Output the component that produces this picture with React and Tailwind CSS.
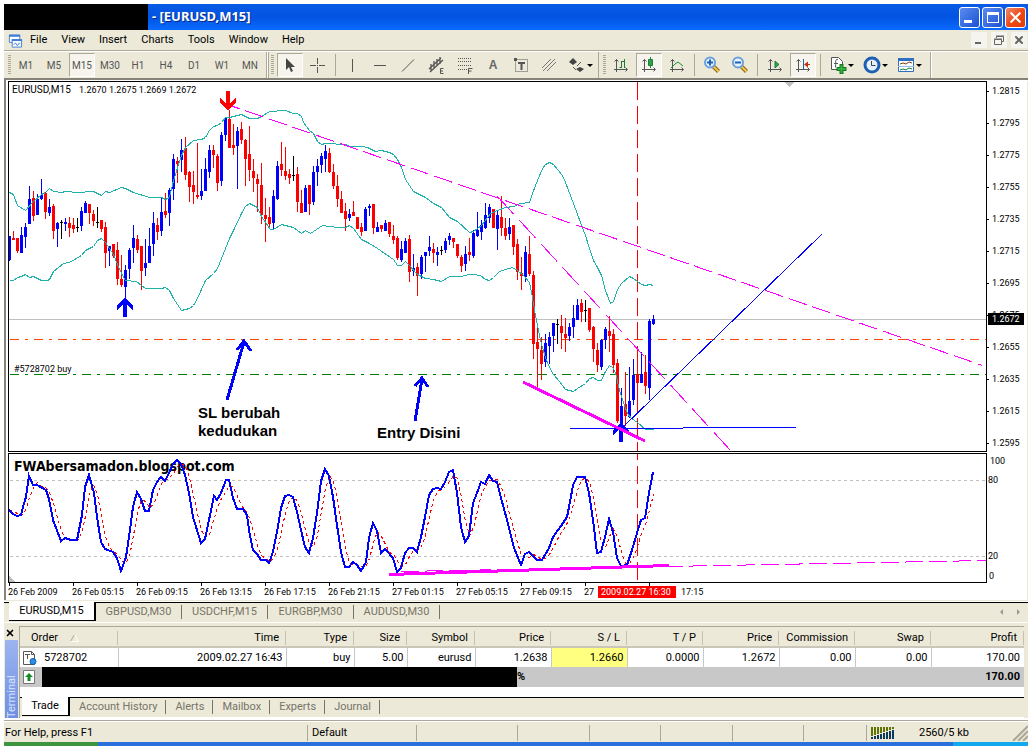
import { X } from 'lucide-react'

// [color, high, body top, body bottom, low], one candle every 4px
const CANDLES = [
  ['b', 236, 236, 260, 261], ['r', 231, 238, 240, 240], ['r', 238, 238, 251, 253], ['b', 227, 235, 253, 253],
  ['b', 223, 227, 237, 248], ['b', 186, 199, 224, 224], ['r', 191, 198, 216, 221], ['b', 194, 199, 215, 215],
  ['b', 179, 195, 199, 200], ['r', 192, 193, 212, 219], ['b', 199, 207, 213, 216], ['r', 204, 206, 231, 239],
  ['b', 222, 223, 229, 247], ['k', 220, 222, 223, 239], ['b', 218, 222, 224, 231], ['r', 217, 223, 228, 237],
  ['r', 218, 225, 229, 233], ['k', 218, 227, 228, 232], ['b', 207, 211, 226, 231], ['b', 201, 203, 213, 213],
  ['r', 204, 204, 213, 224], ['r', 210, 214, 221, 226], ['k', 207, 222, 223, 228], ['r', 220, 220, 229, 232],
  ['r', 222, 227, 253, 268], ['b', 246, 246, 251, 266], ['r', 244, 244, 256, 258], ['r', 242, 250, 279, 285],
  ['r', 255, 279, 285, 287], ['b', 265, 270, 287, 310], ['b', 248, 250, 269, 279], ['b', 225, 238, 248, 263],
  ['r', 235, 239, 250, 253], ['r', 246, 246, 271, 290], ['b', 239, 263, 268, 276], ['b', 228, 246, 263, 263],
  ['b', 212, 223, 244, 256], ['r', 218, 225, 232, 240], ['b', 198, 212, 231, 236], ['r', 193, 211, 215, 218],
  ['b', 188, 190, 213, 226], ['b', 154, 159, 189, 200], ['r', 157, 161, 164, 183], ['b', 139, 150, 160, 172],
  ['r', 137, 148, 175, 180], ['r', 171, 172, 187, 202], ['r', 171, 185, 192, 204], ['r', 143, 195, 197, 199],
  ['b', 169, 191, 196, 200], ['b', 158, 169, 191, 191], ['b', 145, 150, 172, 178], ['r', 145, 150, 155, 168],
  ['r', 154, 156, 183, 191], ['b', 132, 135, 181, 186], ['b', 117, 118, 135, 141], ['r', 110, 119, 148, 148],
  ['r', 124, 145, 148, 155], ['b', 127, 131, 146, 189], ['r', 122, 129, 140, 144], ['r', 139, 140, 159, 186],
  ['r', 126, 154, 170, 181], ['r', 159, 171, 178, 192], ['r', 174, 179, 184, 212], ['r', 163, 185, 215, 224],
  ['r', 198, 215, 219, 242], ['r', 207, 217, 224, 229], ['b', 190, 196, 223, 229], ['b', 161, 166, 199, 200],
  ['r', 142, 164, 170, 176], ['r', 147, 171, 176, 180], ['r', 169, 174, 178, 184], ['k', 156, 175, 176, 181],
  ['r', 167, 174, 202, 212], ['r', 190, 203, 213, 213], ['b', 185, 188, 212, 212], ['r', 185, 185, 204, 215],
  ['b', 166, 172, 202, 205], ['b', 159, 166, 172, 186], ['b', 153, 156, 165, 173], ['b', 145, 151, 159, 172],
  ['r', 148, 153, 172, 173], ['r', 164, 172, 186, 189], ['r', 175, 186, 199, 207], ['r', 191, 199, 213, 213],
  ['r', 203, 211, 219, 231], ['b', 209, 214, 218, 221], ['r', 201, 212, 216, 216], ['r', 217, 217, 229, 229],
  ['r', 223, 227, 232, 236], ['b', 207, 209, 231, 231], ['b', 204, 206, 208, 216], ['r', 204, 204, 228, 234],
  ['b', 222, 227, 232, 232], ['r', 225, 225, 229, 232], ['b', 220, 223, 231, 231], ['r', 222, 222, 234, 237],
  ['r', 225, 236, 240, 244], ['r', 236, 238, 258, 260], ['b', 241, 249, 260, 262], ['b', 238, 241, 253, 253],
  ['r', 235, 239, 272, 282], ['b', 254, 268, 271, 276], ['r', 263, 267, 276, 296], ['b', 255, 257, 274, 279],
  ['b', 252, 252, 256, 272], ['b', 236, 247, 251, 256], ['r', 243, 249, 253, 263], ['b', 247, 252, 255, 266],
  ['k', 246, 250, 251, 255], ['b', 238, 241, 250, 253], ['b', 233, 236, 240, 245], ['r', 238, 238, 242, 248],
  ['r', 244, 244, 256, 258], ['r', 255, 257, 266, 272], ['b', 246, 254, 264, 271], ['r', 238, 252, 255, 261],
  ['b', 230, 233, 256, 258], ['b', 212, 230, 236, 237], ['b', 220, 225, 232, 240], ['b', 203, 215, 228, 229],
  ['b', 204, 207, 218, 223], ['r', 209, 209, 228, 228], ['b', 211, 215, 229, 250], ['r', 196, 217, 228, 236],
  ['r', 218, 228, 236, 240], ['b', 218, 227, 234, 240], ['r', 225, 225, 247, 255], ['r', 239, 244, 272, 280],
  ['r', 257, 273, 276, 290], ['b', 246, 252, 277, 282], ['r', 236, 254, 274, 276], ['r', 271, 275, 344, 359],
  ['r', 328, 342, 349, 388], ['r', 337, 350, 364, 380], ['b', 334, 343, 362, 367], ['b', 332, 337, 346, 364],
  ['b', 323, 323, 336, 352], ['k', 319, 324, 325, 344], ['r', 315, 326, 333, 349], ['r', 318, 334, 338, 352],
  ['b', 323, 327, 336, 341], ['b', 305, 318, 327, 338], ['b', 299, 305, 320, 320], ['r', 299, 303, 312, 322],
  ['k', 300, 310, 311, 322], ['r', 308, 308, 330, 332], ['r', 326, 327, 349, 362], ['r', 343, 350, 365, 372],
  ['b', 339, 340, 367, 370], ['b', 327, 329, 340, 349], ['r', 316, 331, 336, 352], ['r', 329, 334, 365, 373],
  ['r', 359, 363, 421, 423], ['b', 388, 406, 425, 430], ['r', 372, 404, 416, 426], ['b', 367, 401, 417, 418],
  ['b', 359, 375, 400, 405], ['r', 346, 374, 383, 395], ['b', 352, 374, 383, 383], ['r', 355, 372, 386, 394],
  ['b', 319, 321, 388, 400], ['b', 315, 319, 324, 325],
]

const COLORS = { b: '#0000ff', r: '#ff0000', k: '#000000' }

const UPPER_BAND =
  '9,192 13,194 17,205 25,210 33,201 41,194 45,192 49,188 53,191 61,192 65,191 77,192 93,191 101,195 105,191 109,192 121,187 125,188 133,192 149,197 161,197 165,199 169,197 173,180 181,155 185,147 193,140 201,139 205,137 209,130 213,126 217,125 221,122 225,117 229,117 241,114 249,118 257,118 261,116 269,111 285,110 293,113 297,113 301,116 303,122 309,130 313,133 317,141 321,144 325,143 345,144 350,146 361,146 367,147 375,151 381,150 389,152 393,154 397,159 401,167 405,179 413,191 425,197 433,203 441,207 449,217 457,221 469,232 473,231 481,225 487,217 490,213 497,210 505,207 513,206 520,203 529,202 532,193 537,180 542,168 545,164 549,162 553,164 562,175 565,182 573,203 580,222 585,235 589,248 593,260 597,267 601,275 605,290 610,303 613,301 617,289 621,283 629,276 633,278 641,284 645,285 649,284 653,285'

const LOWER_BAND =
  '9,280 13,280 17,277 21,276 25,274 29,277 33,276 41,280 47,280 49,279 53,271 63,263 69,262 81,255 85,250 93,246 97,240 101,238 105,242 113,254 117,264 121,273 125,280 136,281 141,285 145,288 161,288 165,287 169,290 173,298 181,310 185,309 189,308 193,305 197,298 205,280 213,273 217,268 221,258 229,238 233,230 241,213 245,206 249,203 253,205 257,207 261,216 270,229 273,229 281,224 293,227 301,233 305,230 310,233 313,231 322,225 337,227 345,227 349,225 353,228 361,239 369,243 377,248 393,259 397,265 401,265 405,261 409,265 417,274 425,278 433,279 441,281 449,276 461,276 468,274 473,274 480,275 485,279 489,280 493,277 499,271 505,269 512,267 517,270 523,275 529,282 532,297 535,315 540,340 545,357 549,367 553,374 559,381 565,389 573,391 577,388 585,383 589,378 593,377 597,380 601,380 605,371 609,365 612,367 615,372 619,390 623,402 627,413 631,418 637,422 645,429 653,429'

const STOCH = [
  [9, 510], [13, 514], [17, 516], [21, 515], [23, 507], [26, 497], [29, 476], [33, 485], [37, 485], [46, 490],
  [49, 499], [53, 520], [61, 541], [65, 538], [71, 540], [77, 540], [82, 515], [85, 487], [89, 475], [94, 493],
  [97, 517], [101, 542], [105, 549], [113, 552], [117, 558], [121, 571], [126, 557], [129, 537], [133, 507],
  [137, 492], [141, 499], [145, 511], [149, 511], [153, 490], [157, 482], [161, 477], [165, 481], [169, 473],
  [173, 464], [177, 460], [181, 464], [185, 475], [189, 493], [193, 517], [201, 543], [205, 539], [209, 520],
  [214, 496], [217, 500], [221, 493], [226, 480], [229, 480], [233, 498], [237, 509], [243, 509], [247, 515],
  [249, 530], [253, 550], [257, 554], [261, 560], [266, 560], [269, 563], [273, 552], [277, 532], [281, 508],
  [285, 496], [289, 495], [293, 497], [297, 512], [301, 530], [305, 547], [309, 553], [313, 538], [317, 513],
  [321, 481], [325, 469], [329, 476], [333, 497], [337, 525], [341, 552], [345, 567], [349, 567], [353, 562],
  [357, 565], [361, 571], [366, 562], [369, 538], [373, 523], [377, 531], [381, 553], [385, 549], [393, 558],
  [397, 572], [401, 568], [405, 553], [409, 548], [413, 548], [417, 552], [421, 537], [425, 517], [429, 495],
  [433, 489], [437, 488], [441, 489], [445, 482], [449, 472], [453, 470], [457, 493], [461, 527], [465, 542],
  [469, 536], [473, 503], [477, 493], [481, 482], [485, 484], [489, 475], [493, 481], [497, 482], [501, 498],
  [507, 520], [514, 548], [521, 565], [525, 554], [529, 552], [537, 560], [542, 560], [549, 548], [553, 537],
  [561, 526], [567, 517], [570, 502], [573, 485], [577, 477], [585, 477], [589, 493], [593, 520], [597, 553],
  [601, 552], [605, 537], [609, 519], [613, 532], [617, 558], [621, 566], [627, 565], [632, 550], [637, 533],
  [641, 520], [645, 518], [649, 493], [653, 472],
]

function valueAt(x) {
  const i = STOCH.findIndex((p) => p[0] >= x)
  if (i <= 0) return STOCH[0][1]
  const [x0, y0] = STOCH[i - 1]
  const [x1, y1] = STOCH[i]
  return y0 + ((y1 - y0) * (x - x0)) / (x1 - x0)
}

// signal line is the 3 bar average of the main line
const SIGNAL = CANDLES.map((_, i) => {
  const x = 9 + i * 4
  return `${x},${Math.round((valueAt(x) + valueAt(x - 4) + valueAt(x - 8)) / 3)}`
}).join(' ')

const PRICES = ['1.2815', '1.2795', '1.2775', '1.2755', '1.2735', '1.2715', '1.2695', '1.2675', '1.2655', '1.2635', '1.2615', '1.2595']
const TIMES = ['26 Feb 2009', '26 Feb 05:15', '26 Feb 09:15', '26 Feb 13:15', '26 Feb 17:15', '26 Feb 21:15', '27 Feb 01:15', '27 Feb 05:15', '27 Feb 09:15', '27']

function PriceChart() {
  return (
    <svg className="block h-[369px] w-full" shapeRendering="crispEdges" fill="none">
      <g transform="translate(-9 -82)">
        <path d="M784 82h10l-5 5z" fill="#c0c0c0" />
        <path d="M9 319.5H2000" stroke="#c0c0c0" />
        <path d="M10 339.5H2000" stroke="#ff4500" strokeDasharray="9 6 3 6" />
        <path d="M10 374.5H2000" stroke="#008000" strokeDasharray="9 6 3 6" />
        <path d="M637.5 82V460" stroke="#ff0000" strokeDasharray="18 6" />
        {CANDLES.map(([color, high, top, bottom, low], i) => (
          <g key={i} fill={COLORS[color]}>
            <rect x={9 + i * 4} y={high} width="1" height={low - high} />
            <rect x={8 + i * 4} y={top} width="3" height={bottom - top} />
          </g>
        ))}
        <g transform="translate(0.5 0.5)">
          <polyline points={UPPER_BAND} stroke="#20b2aa" />
          <polyline points={LOWER_BAND} stroke="#20b2aa" />
          <path d="M221 102L982 365" stroke="#ff00ff" strokeDasharray="19 6" />
          <path d="M497 196L731 451" stroke="#ff00ff" strokeDasharray="24 8" />
          <path d="M620 429L821 234" stroke="#0000ff" />
          <path d="M569 428H682M682 427H795" stroke="#0000ff" />
        </g>
        <path d="M226 91h4v12l6-5v5l-8 7-8-7v-5l6 5z" fill="#ff0000" />
        <path d="M125 298l8 7v5l-6-5v12h-4v-12l-6 5v-5z" fill="#0000ff" />
        <path d="M621 423l8 7v5l-6-5v12h-4v-12l-6 5v-5z" fill="#0000ff" />
        <path d="M523 382L645 441" stroke="#ff00ff" strokeWidth="3" />
        <path d="M227 400L244 342M237 350l7-9 7 10M415 421L422 379M415 386l7-8 6 9" stroke="#0000ff" strokeWidth="3" />
        <g fill="#000" className="font-[Roboto] text-[10px]">
          <text x="12" y="93">EURUSD,M15</text>
          <text x="79" y="93" className="text-[9px]">1.2670 1.2675 1.2669 1.2672</text>
          <text x="14" y="372" className="text-[9px]">#5728702 buy</text>
        </g>
        <g fill="#000" className="font-['Liberation_Sans'] text-[15px] font-bold">
          <text x="198" y="418">SL berubah</text>
          <text x="198" y="436">kedudukan</text>
          <text x="377" y="438">Entry Disini</text>
        </g>
      </g>
    </svg>
  )
}

function StochasticChart() {
  return (
    <svg className="block h-[128px] w-full" shapeRendering="crispEdges" fill="none">
      <g transform="translate(-9 -454)">
        <path d="M10 480.5H2000M10 556.5H2000" stroke="#c0c0c0" strokeDasharray="3 3" />
        <path d="M9 576v6h6z" fill="#c0c0c0" />
        <path d="M637.5 454V582" stroke="#ff0000" strokeDasharray="18 6" strokeDashoffset="12" />
        <text x="14" y="471" fill="#000" className="font-['DejaVu_Sans_Condensed'] text-[14px] font-bold">
          FWAbersamadon.blogspot.com
        </text>
        <polyline points={SIGNAL} stroke="#ff0000" strokeDasharray="3 3" transform="translate(0.5 0.5)" />
        <polyline points={STOCH.join(' ')} stroke="#0000ff" strokeWidth="2" />
        <path d="M401 571.5L986 560.5" stroke="#ff00ff" strokeDasharray="18 6" />
        <path d="M389 574.5L669 565.5" stroke="#ff00ff" strokeWidth="3" />
      </g>
    </svg>
  )
}

function PriceAxis() {
  return (
    <svg className="block h-[519px] w-10 shrink-0" shapeRendering="crispEdges">
      <g transform="translate(-987 -81)" className="font-[Roboto] text-[9px]">
        {PRICES.map((price, i) => (
          <g key={price}>
            <path d={`M987 ${91.5 + i * 32}h2`} stroke="#000" />
            <text x="992" y={94 + i * 32}>{price}</text>
          </g>
        ))}
        <rect x="988" y="313" width="36" height="12" fill="#000" />
        <text x="992" y="322" fill="#fff">1.2672</text>
        <text x="990" y="464">100</text>
        <text x="988" y="483">80</text>
        <text x="988" y="559">20</text>
        <text x="989" y="579">0</text>
      </g>
    </svg>
  )
}

function TimeAxis() {
  return (
    <svg className="block h-[17px] w-full overflow-visible" shapeRendering="crispEdges">
      <g transform="translate(-8 -583)" className="font-[Roboto] text-[9px]">
        {TIMES.map((time, i) => (
          <g key={i}>
            <path d={`M${9.5 + i * 64} 583v3`} stroke="#000" />
            <text x={8 + i * 64} y="595">{time}</text>
          </g>
        ))}
        <path d="M649.5 583v3" stroke="#000" />
        <rect x="598" y="586" width="78" height="12" fill="#ff0000" />
        <text x="601" y="595" fill="#fff">2009.02.27 16:30</text>
        <text x="681" y="595">17:15</text>
      </g>
    </svg>
  )
}

function Grip() {
  return <span className="h-5 w-[3px] shrink-0 bg-[repeating-linear-gradient(#aca899_0_1px,#ece9d8_1px_2px)]" />
}

function Sep() {
  return <span className="mx-[3px] h-[22px] w-px shrink-0 bg-[#aca899]" />
}

function ToolButton({ label, pressed, wide, children }) {
  const size = wide ? 'w-[34px]' : 'w-7'
  return (
    <button aria-label={label} className={`${size} flex h-6 shrink-0 items-center justify-center`}>
      <span
        className={
          pressed
            ? 'flex h-6 w-[26px] items-center justify-center border border-t-[#aca899] border-l-[#aca899] border-r-white border-b-white bg-[#f6f4ec]'
            : 'flex h-6 items-center justify-center'
        }
      >
        {children}
      </span>
      {wide && <span className="ml-px border-x-[3px] border-t-[3px] border-x-transparent border-t-black" />}
    </button>
  )
}

function Icon({ children }) {
  return (
    <svg width="18" height="18" viewBox="0 0 18 18" fill="none" stroke="#555" strokeWidth="1">
      {children}
    </svg>
  )
}

const AXES = <path d="M4.5 16V3.5M2.5 5.5l2-2 2 2M2 13.5h13M13.5 11.5l2 2-2 2" />

const PERIODS = ['M1', 'M5', 'M15', 'M30', 'H1', 'H4', 'D1', 'W1', 'MN']

function Magnifier({ plus }) {
  return (
    <Icon>
      <path d="M10.5 10.5l5 5" stroke="#8a6414" strokeWidth="4" />
      <path d="M10.5 10.5l5 5" stroke="#f2c84b" strokeWidth="2" />
      <circle cx="7" cy="6.5" r="5" fill="#e6f2fd" stroke="#6aa0dc" strokeWidth="2" />
      <path d={plus ? 'M4 6.5h6M7 3.5v6' : 'M4 6.5h6'} stroke="#1f62b5" strokeWidth="2" />
    </Icon>
  )
}

function Toolbar() {
  return (
    <div className="flex h-[26px] items-center bg-[#ece9d8] pl-1">
      <Grip />
      <div className="ml-px flex font-[Roboto] text-[10px] text-[#555]">
        {PERIODS.map((p) => (
          <ToolButton key={p} label={p} pressed={p === 'M15'}>{p}</ToolButton>
        ))}
      </div>
      <span className="mx-0.5 h-[26px] w-[3px] border-x border-[#aca899] bg-white" />
      <Grip />
      <span className="w-0.5" />
      <ToolButton label="Cursor" pressed>
        <Icon><path d="M5 2v12l3-3 2 5 2-1-2-4h4z" fill="#444" stroke="none" /></Icon>
      </ToolButton>
      <ToolButton label="Crosshair">
        <Icon><path d="M8.5 2v6M8.5 11v6M1 9.5h6M10 9.5h6M8 9.5h1" /></Icon>
      </ToolButton>
      <Sep />
      <ToolButton label="Vertical line"><Icon><path d="M8.5 3v13" /></Icon></ToolButton>
      <ToolButton label="Horizontal line"><Icon><path d="M2 9.5h12" /></Icon></ToolButton>
      <ToolButton label="Trendline"><Icon><path d="M2 15.5l12-12" /></Icon></ToolButton>
      <ToolButton label="Channel">
        <Icon>
          <path d="M1 13l12-11M2 16L15 4M3 15V8M6 13V5M9 10V3M12 8V1" strokeWidth="1.3" />
          <path d="M15.500 12.5h-3v5h3M12 15h3" />
        </Icon>
      </ToolButton>
      <ToolButton label="Fibonacci">
        <Icon>
          <path d="M2 2.5h14M2 5.5h14M2 9.5h14M2 13.5h9" strokeDasharray="1 1" />
          <path d="M12.5 18v-5.500h4M12.5 15h3" />
        </Icon>
      </ToolButton>
      <ToolButton label="Text"><span className="font-['Liberation_Sans'] text-xs font-bold text-[#666]">A</span></ToolButton>
      <ToolButton label="Text label">
        <Icon>
          <path d="M3.5 3.5h12v12h-12z" strokeDasharray="1 1" />
          <path d="M2 2h3v3H2z" fill="#555" stroke="none" />
          <path d="M6 7h7M9.5 7v7" strokeWidth="2" />
        </Icon>
      </ToolButton>
      <ToolButton label="Lines">
        <Icon><path d="M2 12l9-9M3 15L15 3M7 15l9-9" stroke="#777" /></Icon>
      </ToolButton>
      <ToolButton label="Arrows" wide>
        <Icon>
          <path d="M1 6l4-4 4 4-4 3zM8 13l4-2 4 2-4 3z" fill="#444" stroke="none" />
          <path d="M5 11l3 3M9 10l4-4" />
        </Icon>
      </ToolButton>
      <span className="mr-1 h-[26px] w-0.5 border-r border-[#aca899]" />
      <Grip />
      <span className="w-px" />
      <ToolButton label="Bar chart">
        <Icon>{AXES}<path d="M9.5 5v7M7.5 11.5h2M9.5 5.500h3M12.5 3v9" stroke="#18803a" /></Icon>
      </ToolButton>
      <ToolButton label="Candlesticks" pressed>
        <Icon>{AXES}<path d="M10.5 1v11" stroke="#18803a" /><path d="M8.5 3.5h4v6h-4z" fill="#2ea043" stroke="#18803a" /></Icon>
      </ToolButton>
      <ToolButton label="Line chart">
        <Icon>{AXES}<path d="M3 12l4-4 3-2 5 4" stroke="#18903a" /></Icon>
      </ToolButton>
      <Sep />
      <ToolButton label="Zoom in"><Magnifier plus /></ToolButton>
      <ToolButton label="Zoom out"><Magnifier /></ToolButton>
      <Sep />
      <ToolButton label="Auto scroll">
        <Icon>{AXES}<path d="M9 5l4 3.500-4 3.500z" fill="#2ea043" stroke="#18803a" /></Icon>
      </ToolButton>
      <ToolButton label="Chart shift" pressed>
        <Icon>{AXES}<path d="M9.5 3v11" stroke="#1c5fa8" /><path d="M10 8.5l4-3v6z" fill="#c03010" stroke="none" /><path d="M12 8.5h4" stroke="#c03010" /></Icon>
      </ToolButton>
      <Sep />
      <ToolButton label="Indicators" wide>
        <Icon>
          <path d="M2.5 1.5h7l4 4v8h-11z" fill="#fff" />
          <path d="M9 3.5c-3-1-2 2-2.500 8M5 7.5h4" />
          <path d="M12.5 8v10M7.5 13h10" stroke="#127a1e" strokeWidth="4" />
          <path d="M12.5 9v8M8.5 13h8" stroke="#35b043" strokeWidth="2" />
        </Icon>
      </ToolButton>
      <ToolButton label="Periods" wide>
        <Icon>
          <circle cx="9" cy="9" r="7" fill="#e4f0fb" stroke="#1c5fb5" strokeWidth="3" />
          <path d="M8.5 5v4.500h4" stroke="#444" />
        </Icon>
      </ToolButton>
      <ToolButton label="Templates" wide>
        <Icon>
          <path d="M1.5 2.5h15v13h-15z" fill="#fff" stroke="#2f6fc0" />
          <path d="M1 3.5h16" stroke="#2f6fc0" strokeWidth="3" />
          <path d="M3 8l3-1 3 1 3-2 3 1" stroke="#8a3a10" />
          <path d="M1 10.5h16" stroke="#9dbce4" />
          <path d="M3 14l3-1 3 1 3-2 3 1" stroke="#18803a" />
        </Icon>
      </ToolButton>
      <span className="ml-1 h-[26px] w-0.5 border-l border-[#aca899] bg-white" />
    </div>
  )
}

function TitleBar() {
  return (
    <header className="flex h-[26px] items-center bg-linear-to-b from-[#0a5be4] via-[#0253e1] to-[#0a6bff]">
      <div className="h-full w-36 bg-black" />
      <h1 className="ml-1 font-['Noto_Sans'] text-[13px] font-bold text-white [text-shadow:1px_1px_#0a2a80]">- [EURUSD,M15]</h1>
      <div className="ml-auto mr-0.5 flex gap-0.5">
        <button aria-label="Minimize" className="flex h-[21px] w-[21px] items-end rounded-[3px] border border-white bg-linear-to-br from-[#5a8cf0] to-[#1c4fd0] p-1">
          <span className="h-[3px] w-2 bg-white" />
        </button>
        <button aria-label="Maximize" className="flex h-[21px] w-[21px] items-center justify-center rounded-[3px] border border-white bg-linear-to-br from-[#5a8cf0] to-[#1c4fd0]">
          <span className="h-[11px] w-3 border border-t-[3px] border-white" />
        </button>
        <button aria-label="Close" className="flex h-[21px] w-[21px] items-center justify-center rounded-[3px] border border-white bg-linear-to-br from-[#e88a6a] via-[#f04a10] to-[#e03c08] text-white">
          <X size={17} strokeWidth={3} />
        </button>
      </div>
    </header>
  )
}

const MENU = ['File', 'View', 'Insert', 'Charts', 'Tools', 'Window', 'Help']

function MenuBar() {
  return (
    <nav className="flex h-[22px] items-center border-b border-white bg-[#ece9d8] pl-1 shadow-[inset_0_-1px_#aca899]">
      <svg width="15" height="16" viewBox="0 0 16 16" fill="#fff" stroke="#3f7fd8">
        <path d="M1.5 1.5h11v8h-11z" />
        <path d="M1 2.5h12" strokeWidth="2" />
        <path d="M4.5 6.5h10v8h-10z" />
        <path d="M4 7h11" strokeWidth="2" />
        <path d="M6 12l2-2 2 3 2-3 1 1" fill="none" />
      </svg>
      <div className="flex font-[Roboto] text-[11px] text-black">
        {MENU.map((m) => (
          <button key={m} className="px-[7px]">{m}</button>
        ))}
      </div>
      <div className="ml-auto mr-px flex gap-1 pb-0.5 text-[#666]">
        <button aria-label="Minimize chart" className="flex h-4 w-4 items-end bg-[#f5f4ee] p-1">
          <span className="h-0.5 w-1.5 bg-[#666]" />
        </button>
        <button aria-label="Restore chart" className="h-4 w-4 bg-[#f5f4ee]">
          <svg width="16" height="16" fill="none" stroke="#666"><path d="M5.5 6V4.500h7v5H11M5 4h8M3.5 7.5h7v5h-7zM3 7h8" /></svg>
        </button>
        <button aria-label="Close chart" className="flex h-4 w-4 items-center justify-center bg-[#f5f4ee]">
          <X size={12} strokeWidth={4} />
        </button>
      </div>
    </nav>
  )
}

const SYMBOLS = ['GBPUSD,M30', 'USDCHF,M15', 'EURGBP,M30', 'AUDUSD,M30']

function SymbolTabs() {
  return (
    <div className="flex h-[21px] items-start border-t border-b border-t-black border-b-white bg-[#ece9d8] pl-[5px] font-[Roboto] text-[11px] text-[#777469]">
      <button className="-mt-px h-[19px] w-[87px] border-r-2 border-b border-black bg-white pt-px text-black">EURUSD,M15</button>
      {SYMBOLS.map((s) => (
        <button key={s} className="mt-0.5 flex h-3.5 w-[86px] items-center justify-center border-r border-[#777469]">{s}</button>
      ))}
      <div className="ml-auto mr-2 mt-1.5 flex gap-3.5">
        <button aria-label="Scroll left" className="border-y-[3px] border-r-[3px] border-y-transparent border-r-[#999]" />
        <button aria-label="Scroll right" className="border-y-[3px] border-l-[3px] border-y-transparent border-l-[#999]" />
      </div>
    </div>
  )
}

const COLUMNS = [
  ['Time', 'w-[168px]', '2009.02.27 16:43'],
  ['Type', 'w-[68px]', 'buy'],
  ['Size', 'w-[53px]', '5.00'],
  ['Symbol', 'w-[68px]', 'eurusd'],
  ['Price', 'w-[76px]', '1.2638'],
  ['S / L', 'w-[76px]', '1.2660'],
  ['T / P', 'w-[76px]', '0.0000'],
  ['Price', 'w-[76px]', '1.2672'],
  ['Commission', 'w-[76px]', '0.00'],
  ['Swap', 'w-[76px]', '0.00'],
  ['Profit', '', '170.00'],
]

function OrdersTable() {
  return (
    <table className="w-full table-fixed border-collapse font-[Roboto] text-[11px] leading-4 text-black">
      <thead className="bg-[#ece9d8]">
        <tr className="h-[21px] shadow-[inset_0_-2px_#cbc7b8]">
          <th className="w-[98px] p-0 font-normal">
            <div className="flex h-3.5 items-center border-r border-[#c5c2b2] pl-[11px]">
              Order
              <svg className="ml-3" width="9" height="8" fill="none"><path d="M.5 7.5L4.5.5" stroke="#aca899" /><path d="M4.5.5l4 7h-8" stroke="#fff" /></svg>
            </div>
          </th>
          {COLUMNS.map(([name, width], i) => (
            <th key={i} className={`${width} p-0 font-normal`}>
              <div className="flex h-3.5 items-center justify-end border-r border-[#c5c2b2] pr-1.5">{name}</div>
            </th>
          ))}
        </tr>
      </thead>
      <tbody>
        <tr className="h-[19px] bg-white">
          <td className="border-r border-[#c8c8c8] p-0">
            <div className="flex items-center gap-[7px] pl-[3px]">
              <svg width="14" height="16" fill="none" stroke="#555">
                <path d="M.5 1.5h8l3 3v10H.5z" fill="#fff" />
                <path d="M2 4.5h5M4.5 4v5M8.5 1.5v3h3" />
                <circle cx="10" cy="11.5" r="3" fill="#2f8fe8" stroke="#1460b0" />
              </svg>
              5728702
            </div>
          </td>
          {COLUMNS.map(([name, , value], i) => (
            <td
              key={i}
              className={
                name === 'S / L'
                  ? 'border-r border-[#c8c8c8] bg-[#ffff80] p-0 pr-[3px] text-right'
                  : 'border-r border-[#c8c8c8] p-0 pr-[3px] text-right last:border-r-0 last:pr-1'
              }
            >
              {value}
            </td>
          ))}
        </tr>
        <tr className="h-5 bg-[#c8c8c8] font-bold">
          <td colSpan="11" className="p-0">
            <div className="flex h-5 items-center pl-[3px]">
              <svg className="mr-[7px] shrink-0" width="12" height="14"><path d="M.5.5h11v13H.5z" fill="#fff" stroke="#777" /><path d="M6 3l4 4H7.5v4h-3V7H2z" fill="#158a28" /></svg>
              <span className="h-5 w-[475px] bg-black" />%
            </div>
          </td>
          <td className="p-0 pr-1 text-right">170.00</td>
        </tr>
      </tbody>
    </table>
  )
}

const TERMINAL_TABS = ['Account History', 'Alerts', 'Mailbox', 'Experts', 'Journal']

function Terminal() {
  return (
    <section className="flex bg-[#ece9d8] pt-[3px]">
      <div className="ml-px flex w-3.5 shrink-0 flex-col items-start">
        <button aria-label="Close terminal" className="flex h-[14px] items-center text-black"><X size={10} strokeWidth={4} /></button>
        <div className="flex w-[13px] flex-1 bg-linear-to-b from-[#9cb4f0] to-[#6f8fe0]">
          <span className="w-full rotate-180 font-[Roboto] text-[11px] leading-[13px] text-[#d8e2ff] [writing-mode:vertical-rl]">Terminal</span>
        </div>
      </div>
      <div className="mr-1 min-w-0 flex-1 border-l border-t border-[#aca899]">
        <OrdersTable />
        <div className="h-[10px] bg-white" />
        <div className="flex h-[21px] items-start border-t border-b border-t-black border-b-white pl-0.5 font-[Roboto] text-[11px] text-[#777469]">
          <button className="-mt-px h-[19px] w-12 border-r-2 border-b border-black bg-white pt-px text-black">Trade</button>
          {TERMINAL_TABS.map((t) => (
            <button key={t} className="mt-0.5 flex h-3.5 items-center border-r border-[#777469] pl-[9px] pr-2">{t}</button>
          ))}
        </div>
      </div>
    </section>
  )
}

function StatusBar() {
  return (
    <footer className="mt-0.5 flex h-[22px] items-center border-t border-[#aca899] bg-[#ece9d8] pt-[3px] font-[Roboto] text-[11px] leading-4 text-black shadow-[inset_0_1px_#fff]">
      <span className="w-[304px] border-r border-[#aca899] pl-px">For Help, press F1</span>
      <span className="w-[109px] border-r border-[#aca899] pl-1">Default</span>
      <span className="h-4 w-[101px] border-r border-[#aca899]" />
      <span className="h-4 w-[72px] border-r border-[#aca899]" />
      <span className="h-4 w-[71px] border-r border-[#aca899]" />
      <span className="h-4 w-[72px] border-r border-[#aca899]" />
      <span className="h-4 w-[71px] border-r border-[#aca899]" />
      <span className="h-4 flex-1 border-r border-[#aca899]" />
      <div className="flex w-[161px] items-center pl-1">
        <svg width="24" height="12">
          {[0, 1, 2, 3, 4, 5, 6, 7].map((i) => (
            <g key={i}>
              <rect x={i * 3} y="0" width="2" height={9 - i} fill="#5f7300" />
              <rect x={i * 3} y={10 - i} width="2" height={2 + i} fill="#0c3c5c" />
            </g>
          ))}
        </svg>
        <span className="ml-6">2560/5 kb</span>
        <svg className="ml-auto" width="16" height="16" stroke="#aca899" strokeWidth="2"><path d="M1 16L16 1M6 16L16 6M11 16l5-5" /></svg>
      </div>
    </footer>
  )
}

export default function App() {
  return (
    <div className="bg-white px-1 pt-1">
      <TitleBar />
      <MenuBar />
      <Toolbar />
      {/* Chart window */}
      <main className="flex border-l-2 border-t-2 border-[#86837a] bg-white pl-0.5 pt-px">
        <div className="min-w-0 flex-1">
          <div className="border border-black"><PriceChart /></div>
          <div className="mt-px border border-black"><StochasticChart /></div>
          <TimeAxis />
        </div>
        <PriceAxis />
        <div className="w-px bg-[#ece9d8]" />
      </main>
      <div className="h-0.5 border-t border-[#ece9d8] bg-white" />
      <SymbolTabs />
      <Terminal />
      <StatusBar />
      {/* Top edge of the taskbar */}
      <div className="flex h-1 bg-[#2a6fdc]">
        <div className="w-[94px] bg-[#3f9440]" />
        <div className="ml-auto w-[75px] bg-[#12a8ee]" />
      </div>
    </div>
  )
}
